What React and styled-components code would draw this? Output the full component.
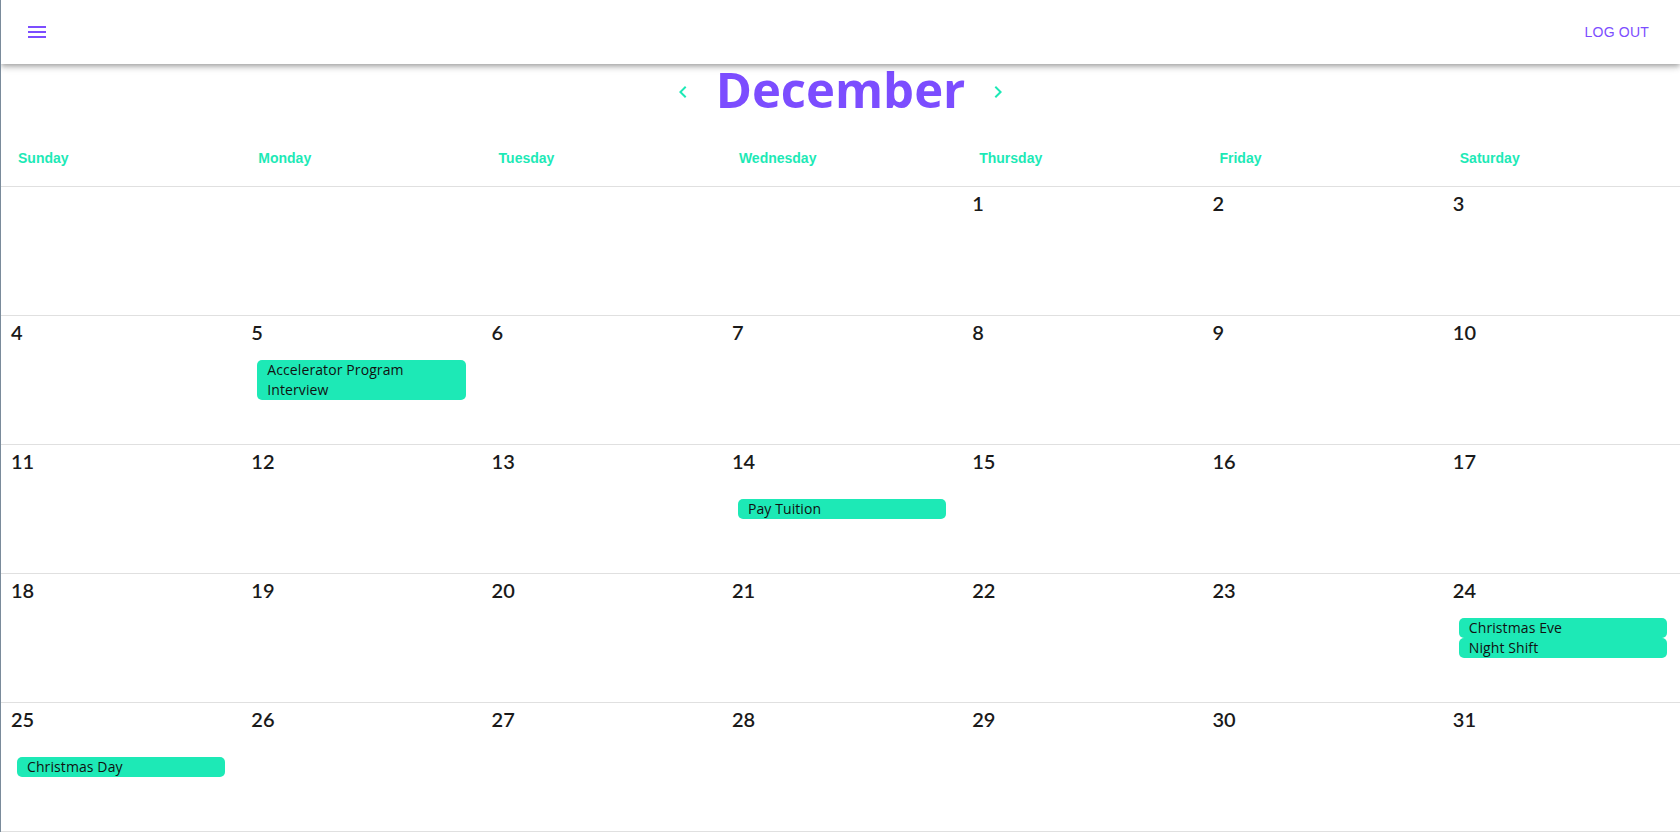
import React from "react";
import styled, { createGlobalStyle } from "styled-components";

const colors = {
  purple: "#7c4dff",
  teal: "#1de9b6",
  line: "#e0e0e0",
};

const GlobalStyle = createGlobalStyle`
  * {
    box-sizing: border-box;
  }

  body {
    margin: 0;
    overflow-x: hidden;
    background: #fff;
    border-left: 1px solid #7a8b9b;
    font-family: "Liberation Sans", Arial, sans-serif;
  }
`;

const weekdays = [
  "Sunday",
  "Monday",
  "Tuesday",
  "Wednesday",
  "Thursday",
  "Friday",
  "Saturday",
];

const events = {
  5: ["Accelerator Program Interview"],
  14: ["Pay Tuition"],
  24: ["Christmas Eve", "Night Shift"],
  25: ["Christmas Day"],
};

// December starts on a Thursday
const buildWeeks = (offset, days) => {
  const cells = [];
  for (let i = 0; i < offset; i++) cells.push(null);
  for (let d = 1; d <= days; d++) cells.push(d);
  while (cells.length % 7) cells.push(null);
  const weeks = [];
  for (let i = 0; i < cells.length; i += 7) weeks.push(cells.slice(i, i + 7));
  return weeks;
};

const MenuIcon = () => (
  <svg width="24" height="24" viewBox="0 0 24 24" fill="currentColor">
    <path d="M3 18h18v-2H3v2zm0-5h18v-2H3v2zm0-7v2h18V6H3z" />
  </svg>
);

const ChevronLeft = () => (
  <svg width="24" height="24" viewBox="0 0 24 24" fill="currentColor">
    <path d="M15.41 7.41L14 6l-6 6 6 6 1.41-1.41L10.83 12z" />
  </svg>
);

const ChevronRight = () => (
  <svg width="24" height="24" viewBox="0 0 24 24" fill="currentColor">
    <path d="M10 6L8.59 7.41 13.17 12l-4.58 4.59L10 18l6-6z" />
  </svg>
);

export default function App() {
  const weeks = buildWeeks(4, 31);

  return (
    <>
      <GlobalStyle />
      <AppBar>
        <MenuButton type="button">
          <MenuIcon />
        </MenuButton>
        <LogoutButton type="button">LOG OUT</LogoutButton>
      </AppBar>

      <MonthNav>
        <NavButton type="button">
          <ChevronLeft />
        </NavButton>
        <MonthTitle>December</MonthTitle>
        <NavButton type="button">
          <ChevronRight />
        </NavButton>
      </MonthNav>

      <WeekdayRow>
        {weekdays.map((day) => (
          <WeekdayLabel key={day}>{day}</WeekdayLabel>
        ))}
      </WeekdayRow>

      {weeks.map((week, i) => (
        <Week key={i}>
          {week.map((day, j) => (
            <DayCell key={j}>
              {day && <DayNumber>{day}</DayNumber>}
              <EventList>
                {(events[day] || []).map((title) => (
                  <EventChip key={title}>{title}</EventChip>
                ))}
              </EventList>
            </DayCell>
          ))}
        </Week>
      ))}
    </>
  );
}

const AppBar = styled.header`
  position: relative;
  z-index: 2;
  display: flex;
  align-items: center;
  justify-content: space-between;
  height: 64px;
  padding: 0 31px 0 24px;
  background: #fff;
  box-shadow: 0px 2px 4px -1px rgba(0, 0, 0, 0.2),
    0px 4px 5px 0px rgba(0, 0, 0, 0.14), 0px 1px 10px 0px rgba(0, 0, 0, 0.12);
`;

const MenuButton = styled.button`
  display: flex;
  padding: 0;
  border: 0;
  background: none;
  color: ${colors.purple};
  cursor: pointer;
`;

const LogoutButton = styled.button`
  padding: 0;
  border: 0;
  background: none;
  color: ${colors.purple};
  font-family: "Liberation Sans", Arial, sans-serif;
  font-size: 14px;
  letter-spacing: 0.2px;
  cursor: pointer;
`;

const MonthNav = styled.div`
  display: flex;
  align-items: center;
  justify-content: center;
  gap: 21px;
  height: 56px;
`;

const NavButton = styled.button`
  display: flex;
  padding: 0;
  border: 0;
  background: none;
  color: ${colors.teal};
  cursor: pointer;
`;

const MonthTitle = styled.h1`
  margin: 0 0 5px;
  color: ${colors.purple};
  font-family: "Open Sans", sans-serif;
  font-size: 49px;
  font-weight: 700;
  line-height: 1;
`;

const WeekdayRow = styled.div`
  display: grid;
  grid-template-columns: repeat(7, 240.3px);
  height: 67px;
  padding-top: 30px;
  border-bottom: 1px solid ${colors.line};
`;

const WeekdayLabel = styled.div`
  padding-left: 17px;
  color: ${colors.teal};
  font-family: "Liberation Sans", Arial, sans-serif;
  font-size: 14px;
  font-weight: 700;
  line-height: 16px;
`;

const Week = styled.div`
  display: grid;
  grid-template-columns: repeat(7, 240.3px);
  height: 129px;
  border-bottom: 1px solid ${colors.line};
`;

const DayCell = styled.div`
  display: grid;
  grid-template-rows: 1fr auto 1fr;
  min-width: 0;
`;

const DayNumber = styled.span`
  grid-row: 1;
  align-self: start;
  padding: 4px 10px 0;
  color: #1a1a1a;
  font-family: Lato, sans-serif;
  font-size: 20px;
  font-weight: 600;
  line-height: 24px;
`;

const EventList = styled.div`
  grid-row: 2;
  display: flex;
  flex-direction: column;
  padding: 0 16px;
`;

const EventChip = styled.div`
  padding: 0 10px;
  border-radius: 5px;
  background: ${colors.teal};
  color: #111;
  font-family: "Open Sans", sans-serif;
  font-size: 14px;
  letter-spacing: 0.1px;
  line-height: 20px;
`;
